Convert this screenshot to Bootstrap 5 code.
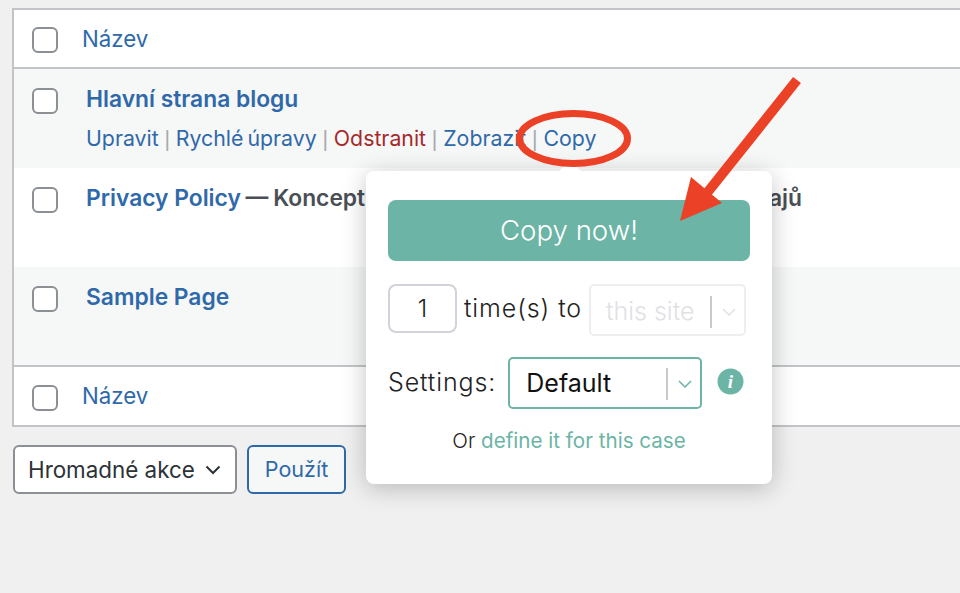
<!DOCTYPE html>
<html lang="cs">
<head>
<meta charset="utf-8">
<title>Stránky</title>
<link href="https://cdn.jsdelivr.net/npm/bootstrap@5.3.0/dist/css/bootstrap.min.css" rel="stylesheet">
<style>
html,body{width:960px;height:593px;overflow:hidden}
body{background:#f0f0f1;font-family:Inter,"Liberation Sans",sans-serif;color:#3c434a;position:relative}
.pages{width:948px;margin:8px 0 0 12px;border:solid #c3c4c7;border-width:2px 0 2px 2px;background:#fff}
.pg-head{padding:3px 0 0 18px;gap:24px;background:#fff}
.pg-head.top{height:59px;border-bottom:2px solid #c3c4c7}
.pg-head.bottom{height:60px;border-top:2px solid #c3c4c7}
.pg-head a{font-size:22.3px;color:#2f69a9;text-decoration:none;line-height:1;margin-top:-2px}
.pg-row{height:99px;padding:19px 0 0 18px;gap:28px}
.pg-row.alt{background:#f6f7f7}
.pg-row.last{height:98px}
.tick{width:26px;height:26px;border:2px solid #8c8f94;border-radius:6px;background:#fff;flex:none;margin:0}
.pg-title{font-size:22.8px;font-weight:600;line-height:22px;color:#4a4f55;white-space:nowrap;word-spacing:-1px}
.pg-title a{color:#2f69a9;text-decoration:none;word-spacing:0}
.pg-acts{font-size:21.3px;line-height:26px;margin-top:15px;white-space:nowrap}
.pg-acts a{color:#2f69a9;text-decoration:none;word-spacing:-2px}
.pg-acts a.del{color:#a52a2a}
.bar{font-family:"Liberation Sans",sans-serif;color:#a7aaad;margin:0 -.2px}
.bulk{margin:18px 0 0 13px;gap:10px}
.bulk-sel{width:224px;height:49px;background:#fff;border:2px solid #8c8f94;border-radius:6px;padding:0 14px 0 13px;font-size:22.4px;color:#2c3338}
.bulk-btn{width:99px;height:49px;background:#f6f7f7;border:2px solid #2f69a9;border-radius:6px;font-size:21.5px;color:#2f69a9;padding:0}
.pop{position:absolute;left:366px;top:171px;width:406px;height:313px;background:#fff;border-radius:8px;box-shadow:0 4px 24px rgba(0,0,0,.24);padding:29px 22px 0;color:#222}
.pop::before{content:"";position:absolute;left:195px;top:-7px;width:18px;height:18px;background:#fff;transform:rotate(45deg)}
.pop-go{display:block;width:362px;height:61px;background:#6cb4a5;color:#fff;border:0;border-radius:8px;font-size:27.6px;font-weight:300;padding:0;position:relative}
.pop-line1{margin-top:23px;height:52px}
.pop-num{width:69px;height:49px;border:2px solid #d2d3da;border-radius:8px;font-size:24px;font-weight:300;color:#222;flex:none}
.pop-lab{font-size:25px;font-weight:300;letter-spacing:.9px;white-space:nowrap}
.pop-line1 .pop-lab{margin:6px 0 0 7px}
.pop-sel{border-radius:5px;flex:none}
.pop-sel.off{width:157px;height:52px;border:2px solid #eceef0;margin-left:auto;margin-right:4px;color:#dfe1e4;font-size:25px;font-weight:300;padding:3px 0 0 15px}
.pop-sel.on{width:194px;height:52px;border:2px solid #6cb4a5;color:#111;font-size:25px;font-weight:400;padding:2px 0 0 16px;margin-left:12px}
.sep{width:2px;height:32px;background:#c8c9cc;margin-left:auto}
.chev{width:14px;height:8px;margin:0 8px 0 10px;flex:none}
.pop-line2{margin-top:21px}
.pop-i{margin:0 0 4px 15px;width:27px;height:27px;flex:none}
.pop-or{margin-top:19px;font-size:20.6px;font-weight:300;text-align:center;line-height:26px}
.pop-or a{color:#6cb4a5;text-decoration:none;font-weight:400}
.mark-up{position:absolute;left:0;top:0;pointer-events:none}
</style>
</head>
<body>
<div class="pages">
  <div class="pg-head top d-flex align-items-center"><span class="tick"></span><a href="#">Název</a></div>
  <div class="pg-row alt d-flex align-items-start">
    <span class="tick"></span>
    <div>
      <div class="pg-title"><a href="#">Hlavní strana blogu</a></div>
      <div class="pg-acts"><a href="#">Upravit</a> <span class="bar">|</span> <a href="#">Rychlé úpravy</a> <span class="bar">|</span> <a class="del" href="#">Odstranit</a> <span class="bar">|</span> <a href="#">Zobrazit</a> <span class="bar">|</span> <a href="#">Copy</a></div>
    </div>
  </div>
  <div class="pg-row d-flex align-items-start">
    <span class="tick"></span>
    <div class="pg-title"><a href="#">Privacy Policy</a> — Koncept, Stránka pro zpracování osobních údajů</div>
  </div>
  <div class="pg-row last alt d-flex align-items-start">
    <span class="tick"></span>
    <div class="pg-title"><a href="#">Sample Page</a></div>
  </div>
  <div class="pg-head bottom d-flex align-items-center"><span class="tick"></span><a href="#">Název</a></div>
</div>
<div class="bulk d-flex">
  <div class="bulk-sel d-flex align-items-center justify-content-between">Hromadné akce
    <svg width="16" height="10" viewBox="0 0 16 10"><path d="M1.5 1.5 8 8l6.5-6.5" fill="none" stroke="#2c3338" stroke-width="2"/></svg>
  </div>
  <button class="bulk-btn" type="button">Použít</button>
</div>

<div class="pop">
  <button class="pop-go" type="button">Copy now!</button>
  <div class="pop-line1 d-flex align-items-start">
    <div class="pop-num d-flex align-items-center justify-content-center">1</div>
    <div class="pop-lab">time(s) to</div>
    <div class="pop-sel off d-flex align-items-center">this site<span class="sep"></span>
      <svg class="chev" viewBox="0 0 14 8"><path d="M1 1l6 6 6-6" fill="none" stroke="#dfe1e4" stroke-width="1.5"/></svg></div>
  </div>
  <div class="pop-line2 d-flex align-items-center">
    <div class="pop-lab">Settings:</div>
    <div class="pop-sel on d-flex align-items-center">Default<span class="sep"></span>
      <svg class="chev" viewBox="0 0 14 8"><path d="M1 1l6 6 6-6" fill="none" stroke="#6cb4a5" stroke-width="1.5"/></svg></div>
    <svg class="pop-i" viewBox="0 0 27 27"><circle cx="13.5" cy="13.5" r="13" fill="#6cb4a5"/><text x="13.5" y="20" text-anchor="middle" font-family="Liberation Serif,serif" font-style="italic" font-weight="700" font-size="19" fill="#fff">i</text></svg>
  </div>
  <div class="pop-or">Or <a href="#">define it for this case</a></div>
</div>

<svg class="mark-up" width="960" height="593" viewBox="0 0 960 593">
  <ellipse cx="573.5" cy="138.5" rx="54" ry="25" fill="none" stroke="#eb4126" stroke-width="7"/>
  <path d="M797 80 703 198" stroke="#eb4126" stroke-width="10" fill="none"/>
  <path d="M691 177 722 203 680 221Z" fill="#eb4126"/>
</svg>
</body>
</html>
